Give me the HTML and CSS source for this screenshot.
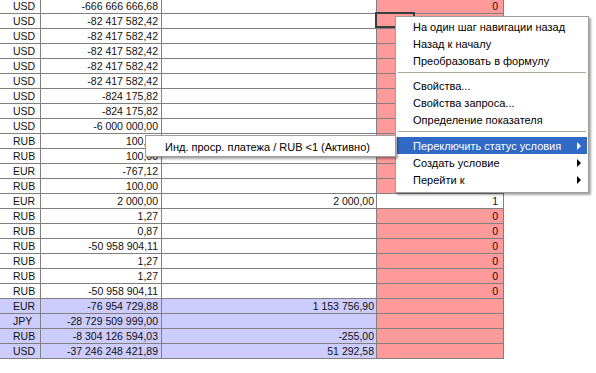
FILE: index.html
```html
<!DOCTYPE html>
<html lang="ru">
<head>
    <meta charset="UTF-8">
    <title>Отчёт</title>
    <link rel="stylesheet" href="styles.css">
</head>
<body>

<div class="sheet">
    <div class="row"><div class="c cur">USD</div><div class="c">-666 666 666,68</div><div class="c"></div><div class="c flag">0</div></div>
    <div class="row"><div class="c cur">USD</div><div class="c">-82 417 582,42</div><div class="c"></div><div class="c flag"></div></div>
    <div class="row"><div class="c cur">USD</div><div class="c">-82 417 582,42</div><div class="c"></div><div class="c flag"></div></div>
    <div class="row"><div class="c cur">USD</div><div class="c">-82 417 582,42</div><div class="c"></div><div class="c flag"></div></div>
    <div class="row"><div class="c cur">USD</div><div class="c">-82 417 582,42</div><div class="c"></div><div class="c flag"></div></div>
    <div class="row"><div class="c cur">USD</div><div class="c">-82 417 582,42</div><div class="c"></div><div class="c flag"></div></div>
    <div class="row"><div class="c cur">USD</div><div class="c">-824 175,82</div><div class="c"></div><div class="c flag"></div></div>
    <div class="row"><div class="c cur">USD</div><div class="c">-824 175,82</div><div class="c"></div><div class="c flag"></div></div>
    <div class="row"><div class="c cur">USD</div><div class="c">-6 000 000,00</div><div class="c"></div><div class="c flag"></div></div>
    <div class="row"><div class="c cur">RUB</div><div class="c">100,00</div><div class="c"></div><div class="c flag"></div></div>
    <div class="row"><div class="c cur">RUB</div><div class="c">100,00</div><div class="c"></div><div class="c flag"></div></div>
    <div class="row"><div class="c cur">EUR</div><div class="c">-767,12</div><div class="c"></div><div class="c flag"></div></div>
    <div class="row"><div class="c cur">RUB</div><div class="c">100,00</div><div class="c"></div><div class="c flag"></div></div>
    <div class="row"><div class="c cur">EUR</div><div class="c">2 000,00</div><div class="c">2 000,00</div><div class="c">1</div></div>
    <div class="row"><div class="c cur">RUB</div><div class="c">1,27</div><div class="c"></div><div class="c flag">0</div></div>
    <div class="row"><div class="c cur">RUB</div><div class="c">0,87</div><div class="c"></div><div class="c flag">0</div></div>
    <div class="row"><div class="c cur">RUB</div><div class="c">-50 958 904,11</div><div class="c"></div><div class="c flag">0</div></div>
    <div class="row"><div class="c cur">RUB</div><div class="c">1,27</div><div class="c"></div><div class="c flag">0</div></div>
    <div class="row"><div class="c cur">RUB</div><div class="c">1,27</div><div class="c"></div><div class="c flag">0</div></div>
    <div class="row"><div class="c cur">RUB</div><div class="c">-50 958 904,11</div><div class="c"></div><div class="c flag">0</div></div>
    <div class="row total"><div class="c cur">EUR</div><div class="c">-76 954 729,88</div><div class="c">1 153 756,90</div><div class="c flag"></div></div>
    <div class="row total"><div class="c cur">JPY</div><div class="c">-28 729 509 999,00</div><div class="c"></div><div class="c flag"></div></div>
    <div class="row total"><div class="c cur">RUB</div><div class="c">-8 304 126 594,03</div><div class="c">-255,00</div><div class="c flag"></div></div>
    <div class="row total"><div class="c cur">USD</div><div class="c">-37 246 248 421,89</div><div class="c">51 292,58</div><div class="c flag"></div></div>
</div>

<!-- рамка выделенной ячейки -->
<div class="selection"></div>

<!-- контекстное меню -->
<ul class="menu">
    <li class="item">На один шаг навигации назад</li>
    <li class="item">Назад к началу</li>
    <li class="item">Преобразовать в формулу</li>
    <li class="sep"></li>
    <li class="item">Свойства...</li>
    <li class="item">Свойства запроса...</li>
    <li class="item">Определение показателя</li>
    <li class="sep sep-low"></li>
    <li class="item active">Переключить статус условия <span class="arrow"></span></li>
    <li class="item">Создать условие <span class="arrow"></span></li>
    <li class="item">Перейти к <span class="arrow"></span></li>
</ul>

<!-- подменю -->
<ul class="menu submenu">
    <li class="item">Инд. проср. платежа / RUB &lt;1 (Активно)</li>
</ul>

</body>
</html>
```

FILE: styles.css
```css
* {
    margin: 0;
    padding: 0;
    box-sizing: border-box;
}

body {
    font-family: "Liberation Sans", Arial, sans-serif;
    background-color: #fff;
    color: #111;
    overflow: hidden;
}

/* Таблица */
.sheet {
    margin-top: -1px;
    width: 504px;
}

.row {
    display: grid;
    grid-template-columns: 41px 121px 215px 127px;
    height: 15px;
}

.c {
    border-right: 1px solid #808080;
    border-bottom: 1px solid #808080;
    font-size: 10.5px;
    line-height: 14px;
    text-align: right;
    padding-right: 3px;
    white-space: nowrap;
    overflow: hidden;
}

.c.cur {
    padding-left: 13px;
    padding-right: 5px;
    text-align: left;
}

.c:nth-child(3) {
    padding-right: 2px;
}

.c:nth-child(4) {
    padding-right: 5px;
}

.flag {
    background-color: #ff9a9a;
}

.total .c:not(.flag) {
    background-color: #ccccff;
}

.selection {
    position: absolute;
    left: 375px;
    top: 12px;
    width: 40px;
    height: 16px;
    border: 2px solid #3a3f3e;
}

/* Контекстное меню */
.menu {
    position: absolute;
    left: 395px;
    top: 16px;
    width: 194px;
    height: 177px;
    list-style: none;
    background-color: #fff;
    border: 1px solid #9d9d9d;
    padding: 1px 1px 4px 1px;
    box-shadow: 2px 2px 2px rgba(0, 0, 0, 0.35);
    font-size: 11px;
    color: #000;
}

.item {
    display: flex;
    justify-content: space-between;
    align-items: center;
    height: 17px;
    padding-left: 16px;
    padding-right: 6px;
    white-space: nowrap;
}

.item.active {
    background-color: #316ac5;
    color: #fff;
}

.arrow {
    width: 0;
    height: 0;
    border-left: 4px solid #000;
    border-top: 4px solid transparent;
    border-bottom: 4px solid transparent;
}

.active .arrow {
    border-left-color: #fff;
}

.sep {
    height: 8px;
    padding-top: 3px;
    margin: 0 1px;
}

.sep::before {
    content: "";
    display: block;
    height: 1px;
    background-color: #aca899;
}

.sep-low {
    height: 9px;
}

.submenu {
    left: 145px;
    top: 135px;
    width: 251px;
    height: 22px;
    padding: 2px 1px;
}

.submenu .item {
    padding-left: 18px;
}
```
